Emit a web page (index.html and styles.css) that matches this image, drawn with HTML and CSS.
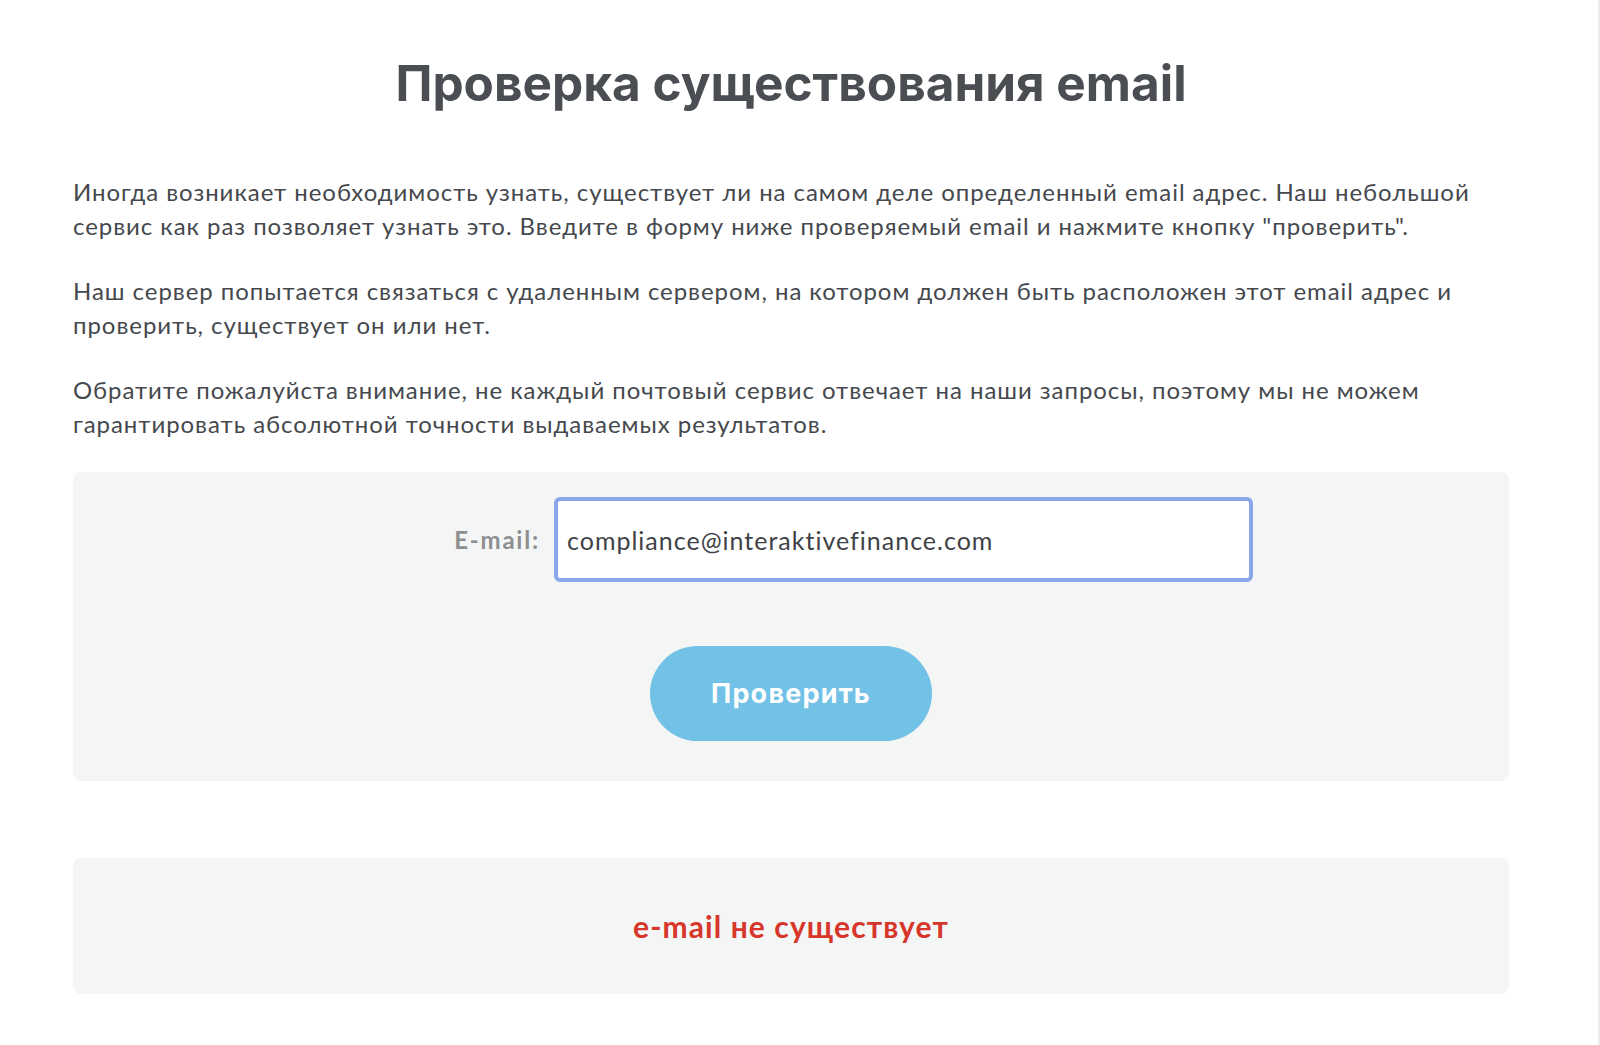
FILE: index.html
```html
<!DOCTYPE html>
<html lang="ru">
<head>
<meta charset="UTF-8">
<title>Проверка существования email</title>
<link rel="stylesheet" href="styles.css">
</head>
<body>
    <div class="page">
        <h1 class="title">Проверка существования email</h1>
        <div class="intro">
            <p>Иногда возникает необходимость узнать, существует ли на самом деле определенный email адрес. Наш небольшой сервис как раз позволяет узнать это. Введите в форму ниже проверяемый email и нажмите кнопку "проверить".</p>
            <p>Наш сервер попытается связаться с удаленным сервером, на котором должен быть расположен этот email адрес и проверить, существует он или нет.</p>
            <p>Обратите пожалуйста внимание, не каждый почтовый сервис отвечает на наши запросы, поэтому мы не можем гарантировать абсолютной точности выдаваемых результатов.</p>
        </div>
        <form class="check-form">
            <div class="form-row">
                <label for="J_email">E-mail:</label>
                <input type="text" id="J_email" value="compliance@interaktivefinance.com">
            </div>
            <div class="form-actions">
                <button type="button" class="btn-check">Проверить</button>
            </div>
        </form>
        <div class="result">
            <span class="result-text">e-mail не существует</span>
        </div>
    </div>
</body>
</html>
```

FILE: styles.css
```css
* {
    margin: 0;
    padding: 0;
    box-sizing: border-box;
}
html, body {
    background: #fff;
}
body {
    font-family: Lato, "Noto Sans", sans-serif;
    color: #45484d;
    border-right: 2px solid #ececec;
    min-height: 1045px;
}
.page {
    width: 1436px;
    margin-left: 73px;
    padding-top: 53px;
    padding-bottom: 50px;
}
.title {
    font-family: Inter, "Noto Sans", sans-serif;
    font-size: 49.5px;
    font-weight: 700;
    line-height: 60px;
    text-align: center;
    color: #4a4d52;
    margin-bottom: 62px;
}
.intro p {
    font-size: 24px;
    line-height: 34px;
    letter-spacing: 0.95px;
    margin-bottom: 31px;
}
.check-form {
    background: #f4f5f5;
    border-radius: 8px;
    padding: 25px 0 40px;
}
.form-row {
    display: flex;
    align-items: center;
    padding-left: 380px;
}
.form-row label {
    width: 101px;
    padding-right: 14px;
    text-align: right;
    font-size: 24px;
    font-weight: 700;
    letter-spacing: 1.8px;
    color: #8d8e90;
}
.form-row input {
    width: 699px;
    height: 85px;
    padding: 0 9px;
    font-family: Lato, "Noto Sans", sans-serif;
    font-size: 25px;
    letter-spacing: 1px;
    color: #3f4247;
    background: #fff;
    border: 4px solid #8aa7e7;
    border-radius: 6px;
    outline: none;
}
.form-actions {
    display: flex;
    justify-content: center;
    margin-top: 64px;
}
.btn-check {
    width: 282px;
    height: 95px;
    border: 0;
    border-radius: 48px;
    background: #72c1e6;
    color: #fff;
    font-family: Inter, "Noto Sans", sans-serif;
    font-size: 27px;
    font-weight: 700;
    letter-spacing: 1.2px;
}
.result {
    margin-top: 77px;
    height: 136px;
    background: #f4f5f5;
    border-radius: 8px;
    display: flex;
    align-items: center;
    justify-content: center;
}
.result-text {
    font-size: 30px;
    font-weight: 700;
    letter-spacing: 1.1px;
    color: #d6372a;
}
```
